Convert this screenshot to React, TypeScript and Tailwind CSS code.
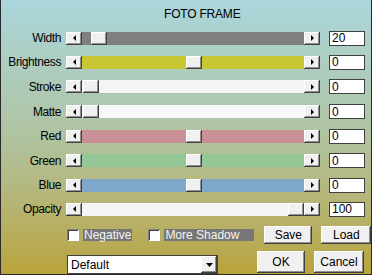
const raised =
  'bg-[#f0f0f0] shadow-[inset_-1px_-1px_0_#404040,inset_1px_1px_0_#ffffff,inset_-2px_-2px_0_#909090]';

interface Row {
  label: string;
  track: string;
  pos: number; // thumb offset inside track, px
  value: string;
  h: string;
}

const rows: Row[] = [
  { label: 'Width', track: 'bg-[#808080]', pos: 9, value: '20', h: 'h-[24px]' },
  { label: 'Brightness', track: 'bg-[#c9c834]', pos: 104, value: '0', h: 'h-[24px]' },
  { label: 'Stroke', track: 'bg-[#f4f4f4]', pos: 1, value: '0', h: 'h-[25px]' },
  { label: 'Matte', track: 'bg-[#f8f8f8]', pos: 1, value: '0', h: 'h-[25px]' },
  { label: 'Red', track: 'bg-[#c99196]', pos: 104, value: '0', h: 'h-[24px]' },
  { label: 'Green', track: 'bg-[#93c896]', pos: 104, value: '0', h: 'h-[25px]' },
  { label: 'Blue', track: 'bg-[#7fa8cb]', pos: 104, value: '0', h: 'h-[24px]' },
  { label: 'Opacity', track: 'bg-[#f4f4f4]', pos: 206, value: '100', h: 'h-[24px]' },
];

function Arrow({ dir }: { dir: 'left' | 'right' | 'down' }) {
  const pts = dir === 'left' ? '4,0 4,6 1,3' : dir === 'right' ? '1,0 1,6 4,3' : '0,1 7,1 3.5,5';
  const w = dir === 'down' ? 7 : 5;
  return (
    <svg width={w} height={6} viewBox={`0 0 ${w} 6`}>
      <polygon points={pts} fill="#000" />
    </svg>
  );
}

function ScrollBar({ row }: { row: Row }) {
  return (
    <div className="flex h-[13px] w-[254px]">
      <div className={`${raised} flex w-[16px] items-center justify-center`}>
        <Arrow dir="left" />
      </div>
      <div className={`relative flex-1 ${row.track}`}>
        <div className={`${raised} absolute top-0 h-full w-[16px]`} style={{ left: row.pos }} />
      </div>
      <div className={`${raised} flex w-[16px] items-center justify-center`}>
        <Arrow dir="right" />
      </div>
    </div>
  );
}

function Check({ label, wide }: { label: string; wide?: boolean }) {
  return (
    <div className="flex items-center">
      <div className="h-[12px] w-[12px] bg-white shadow-[inset_1px_1px_0_#808080,inset_-1px_-1px_0_#ffffff,inset_2px_2px_0_#404040]" />
      <span
        className={`ml-[4px] flex h-[12px] items-center bg-[#767676] px-[1px] text-[12px] leading-none text-[#f4f4f4] ${
          wide ? 'w-[90px]' : ''
        }`}
      >
        {label}
      </span>
    </div>
  );
}

function Btn({ label, w, h }: { label: string; w: string; h: string }) {
  return (
    <div className={`${raised} ${w} ${h} flex items-center justify-center text-[12px] text-black`}>{label}</div>
  );
}

export default function App() {
  return (
    <div className="h-[275px] w-[372px] overflow-hidden border-x border-b border-[#2a2a2a] bg-gradient-to-b from-[#aad6dc] via-[#b0c3a0] to-[#b9a43a] pt-[2px] font-['Liberation_Sans',Arial,sans-serif] text-black">
      <div className="flex h-[24px] items-center pl-[163px] text-[12px] tracking-[-0.2px]">FOTO FRAME</div>

      {rows.map((row) => (
        <div key={row.label} className={`flex items-center ${row.h}`}>
          <div className="w-[60px] text-right text-[12px] tracking-[-0.4px]">{row.label}</div>
          <div className="ml-[5px]">
            <ScrollBar row={row} />
          </div>
          <div className="ml-[9px] flex h-[15px] w-[36px] items-center border border-[#404040] bg-white pl-[2px] text-[12px]">
            {row.value}
          </div>
        </div>
      ))}

      <div className="flex h-[28px] items-center pl-[66px]">
        <Check label="Negative" />
        <div className="ml-[16px]">
          <Check label="More Shadow" wide />
        </div>
        <div className="ml-[10px]">
          <Btn label="Save" w="w-[48px]" h="h-[18px]" />
        </div>
        <div className="ml-[9px]">
          <Btn label="Load" w="w-[50px]" h="h-[18px]" />
        </div>
      </div>

      <div className="flex h-[25px] items-end pl-[66px]">
        <div className="flex h-[19px] w-[151px] items-center border border-[#404040] bg-white">
          <span className="flex-1 pl-[3px] text-[12px]">Default</span>
          <div className={`${raised} flex h-full w-[16px] items-center justify-center`}>
            <Arrow dir="down" />
          </div>
        </div>
        <div className="mb-[1px] ml-[39px]">
          <Btn label="OK" w="w-[48px]" h="h-[22px]" />
        </div>
        <div className="mb-[1px] ml-[9px]">
          <Btn label="Cancel" w="w-[50px]" h="h-[22px]" />
        </div>
      </div>
    </div>
  );
}
